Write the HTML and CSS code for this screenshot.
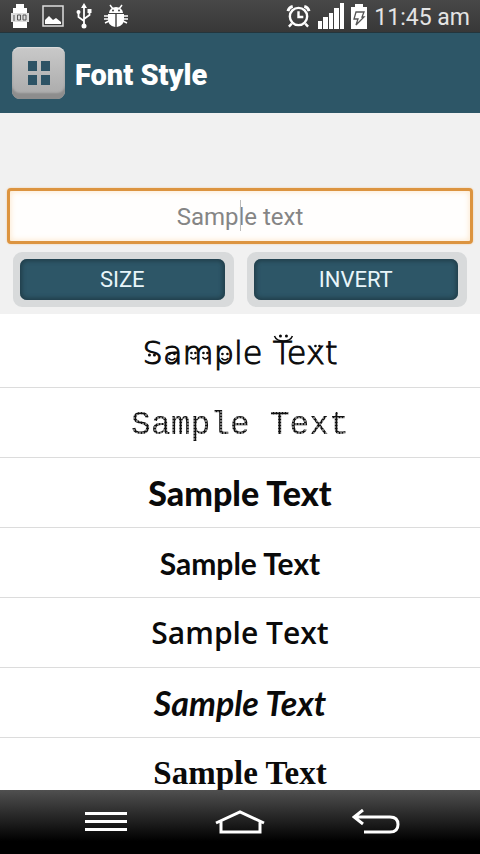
FILE: index.html
```html
<!DOCTYPE html>
<html lang="en">
<head>
<meta charset="utf-8">
<meta name="viewport" content="width=device-width, initial-scale=1">
<title>Font Style</title>
<link rel="stylesheet" href="styles.css">
</head>
<body>
<div class="status">
  <div class="status-left">
    <svg width="20" height="26" viewBox="0 0 20 26"><path fill="#fff" d="M6 1h8v4h3v20H3V5h3z"/><rect x="1" y="10" width="18" height="9" fill="#ddd"/><path d="M4 12v6M7.500 12h3v5h-3zM13 12h3v5h-3z" fill="none" stroke="#555" stroke-width="1"/></svg>
    <svg width="22" height="22" viewBox="0 0 22 22"><rect x="1" y="1" width="20" height="20" fill="none" stroke="#ddd" stroke-width="1.500"/><path fill="#fff" d="M3 19v-4l4-4 4 4 3-2 5 4v2z"/></svg>
    <svg width="16" height="26" viewBox="0 0 16 26"><g fill="none" stroke="#fff" stroke-width="1.800"><path d="M8 3v19M8 18 2.500 14V9M8 16l5.500-4V8"/></g><path fill="#fff" d="M8 0l3 5H5z"/><circle cx="8" cy="23" r="2.500" fill="#fff"/><circle cx="2.500" cy="9" r="2" fill="#fff"/><path fill="#fff" d="M11.500 6h4v4h-4z"/></svg>
    <svg width="24" height="24" viewBox="0 0 24 24"><path fill="#fff" d="M5 9a7 6 0 0 1 14 0zM4 10h7.300v13C6 22 4 19 4 15zM12.700 10H20v5c0 4-2 7-7.300 8z"/><path d="M6 1l3 4M18 1l-3 4M0 12h4M0 15h4M1 19l4-2M20 12h4M20 15h4M19 17l4 2" stroke="#fff" stroke-width="1.500"/><circle cx="9" cy="6.500" r="1" fill="#444"/><circle cx="15" cy="6.500" r="1" fill="#444"/></svg>
  </div>
  <div class="status-right">
    <svg width="25" height="24" viewBox="0 0 26 24"><g fill="none" stroke="#fff" stroke-width="2.500"><circle cx="13" cy="12.500" r="9"/><path d="M13 7v6h5M6 20l-3 3M20 20l3 3"/><path stroke-width="3" d="M2 7q1-4 5-5M24 7q-1-4-5-5"/></g></svg>
    <svg width="26" height="26" viewBox="0 0 26 26"><path fill="#fff" d="M0 18h4v8H0zM5 14h5v12H5zM11 10h4v16h-4zM16 5h5v21h-5zM22 0h4v26h-4z"/></svg>
    <svg width="16" height="25" viewBox="0 0 16 25"><path fill="#fff" d="M4 0h8v3h4v22H0V3h4z"/><path fill="none" stroke="#555" stroke-width="1.300" d="M5 8h8l-2 5h2l-8 8 2-6H3z"/></svg>
    <span class="clock">11:45 am</span>
  </div>
</div>
<header class="header">
  <button class="grid-button" aria-label="Apps">
    <svg width="24" height="24" viewBox="0 0 24 24"><path fill="#2d5365" d="M1 0h9v10H1zM14 0h9v10h-9zM1 14h9v10H1zM14 14h9v10h-9z"/></svg>
  </button>
  <h1>Font Style</h1>
</header>
<main>
  <section class="controls">
    <div class="field">
      <input type="text" placeholder="Sample text" aria-label="Sample text">
      <span class="caret"></span>
    </div>
    <div class="buttons">
      <button class="action">SIZE</button>
      <button class="action">INVERT</button>
    </div>
  </section>
  <ul class="fonts">
    <li class="faces">
      <span>Sample Text
        <svg class="smiles" viewBox="0 0 194 40" aria-hidden="true">
          <g fill="#0a0a0a">
            <circle cx="6" cy="22" r="1.500"/><circle cx="11" cy="22" r="1.500"/>
            <circle cx="26" cy="21" r="1.300"/><circle cx="31" cy="21" r="1.300"/>
            <circle cx="48" cy="20" r="1.300"/><circle cx="52" cy="20" r="1.300"/>
            <circle cx="60" cy="20" r="1.300"/><circle cx="64" cy="20" r="1.300"/>
            <circle cx="79" cy="21" r="1.300"/><circle cx="84" cy="21" r="1.300"/>
            <circle cx="137" cy="3" r="1.500"/><circle cx="143" cy="3" r="1.500"/>
            <circle cx="172" cy="13" r="1.300"/><circle cx="176" cy="13" r="1.300"/>
          </g>
          <path fill="none" stroke="#0a0a0a" stroke-width="1.500" d="M25 25q3.500 4 7 0M47 24q3 4 6 0M59 24q3 4 6 0M78 25q3.500 4 7 0M131 3q2 5 9 5t9-5"/>
        </svg>
      </span>
    </li>
    <li class="dots"><span>Sample Text</span></li>
    <li class="chunky"><span>Sample Text</span></li>
    <li class="neat"><span>Sample Text</span></li>
    <li class="marker"><span>Sample Text</span></li>
    <li class="brush"><span>Sample Text</span></li>
    <li class="gothic"><span>Sample Text</span></li>
  </ul>
</main>
<nav class="nav">
  <button aria-label="Menu"><svg width="44" height="24" viewBox="0 0 44 24"><path d="M1 3.500h42M1 11.500h42M1 19.500h42" stroke="#fff" stroke-width="3"/></svg></button>
  <button aria-label="Home"><svg width="52" height="26" viewBox="0 0 52 26"><path d="M2 14 26 3l24 11M7 12v11h39V12" fill="none" stroke="#fff" stroke-width="3"/></svg></button>
  <button aria-label="Back"><svg width="48" height="26" viewBox="0 0 48 26"><path d="M2 8h36q8 0 8 7.500T38 23H12M11 1 2 8l9 7" fill="none" stroke="#fff" stroke-width="3"/></svg></button>
</nav>
</body>
</html>
```
FILE: styles.css
```css
* { box-sizing: border-box; }

body {
  margin: 0;
  height: 100vh;
  display: flex;
  flex-direction: column;
  overflow: hidden;
  background: #fff;
  font-family: Roboto, "Liberation Sans", sans-serif;
}

button {
  border: 0;
  padding: 0;
  background: none;
  font-family: inherit;
}

svg { display: block; }

.status {
  flex: none;
  height: 33px;
  padding: 0 10px;
  display: flex;
  justify-content: space-between;
  align-items: center;
  background: linear-gradient(#484848, #383838);
  border-bottom: 1px solid #24353c;
}

.status-left {
  display: flex;
  align-items: center;
  gap: 12px;
}

.status-right {
  display: flex;
  align-items: center;
  gap: 7px;
}

.clock {
  padding-top: 4px;
  color: #e4e4e4;
  font-size: 23px;
  line-height: 32px;
}

.header {
  flex: none;
  height: 80px;
  padding: 0 12px;
  display: flex;
  align-items: center;
  gap: 10px;
  background: #2d5667;
}

.grid-button {
  width: 53px;
  height: 52px;
  display: flex;
  align-items: center;
  justify-content: center;
  border-radius: 8px;
  background: linear-gradient(#c9c9c9, #a9a9a9);
  box-shadow: inset 0 -6px 2px #8d8d8d, inset 0 1px 1px #ddd;
}

h1 {
  margin: 0;
  padding-top: 4px;
  color: #fff;
  font-size: 29px;
  line-height: 36px;
  font-weight: 900;
}

main {
  flex: 1;
  min-height: 0;
  overflow: hidden;
}

.controls {
  padding: 75px 7px 7px;
  background: #f1f1f1;
}

.field { position: relative; }

input {
  display: block;
  width: 100%;
  height: 56px;
  border: 3px solid #dc9440;
  border-radius: 4px;
  padding: 2px 0 0;
  background: #fffefd;
  box-shadow: inset 0 0 6px #fce4c4, 0 0 2px #f4c998;
  text-align: center;
  font-family: inherit;
  font-size: 24px;
  outline: 0;
}

input::placeholder { color: #858585; }

.caret {
  position: absolute;
  left: 50%;
  top: 12px;
  width: 1px;
  height: 31px;
  background: #bbb;
}

.buttons {
  display: flex;
  gap: 13px;
  padding: 8px 6px 0;
}

.action {
  flex: 1;
  height: 55px;
  border: 7px solid #d8dadb;
  border-right-width: 9px;
  border-radius: 9px;
  background: #d8dadb;
  color: #e8f5fa;
  font-size: 22px;
  position: relative;
  z-index: 0;
}

.action::before {
  content: "";
  position: absolute;
  inset: 0;
  z-index: -1;
  border-radius: 7px;
  background: #2d5667;
  box-shadow: inset 0 0 4px 2px #213e4a;
}

.fonts {
  list-style: none;
  margin: 0;
  padding: 4px 0 0;
}

.fonts li {
  height: 70px;
  display: flex;
  align-items: center;
  justify-content: center;
  border-bottom: 1px solid #dcdcdc;
  color: #0a0a0a;
  line-height: 40px;
  white-space: nowrap;
}

.faces {
  font-family: "DejaVu Sans", sans-serif;
  font-weight: 200;
  font-size: 32px;
  -webkit-text-stroke: 1px #0a0a0a;
}

.faces span { position: relative; }

.smiles {
  position: absolute;
  left: 0;
  top: 0;
  width: 100%;
  height: 40px;
}

.dots {
  padding-top: 6px;
  font-family: "Liberation Mono", monospace;
  font-size: 33px;
}

.dots span {
  background: radial-gradient(circle, #111 0 1px, transparent 2px) 0 0 / 3px 3px;
  background-clip: text;
  color: transparent;
}

.chunky {
  font-family: Lato, sans-serif;
  font-weight: 900;
  font-size: 34px;
}

.neat {
  font-family: Lato, sans-serif;
  font-weight: 700;
  font-size: 30px;
}

.marker {
  font-family: "Open Sans", sans-serif;
  font-weight: 600;
  font-size: 30px;
}

.brush {
  font-family: Lato, sans-serif;
  font-style: italic;
  font-weight: 700;
  font-size: 34px;
}

.gothic {
  font-family: "Liberation Serif", serif;
  font-weight: 700;
  font-size: 33px;
}

.nav {
  flex: none;
  height: 64px;
  padding: 0 80px 0 84px;
  display: flex;
  justify-content: space-between;
  align-items: center;
  background: linear-gradient(#505050, #000 80%);
}
```
